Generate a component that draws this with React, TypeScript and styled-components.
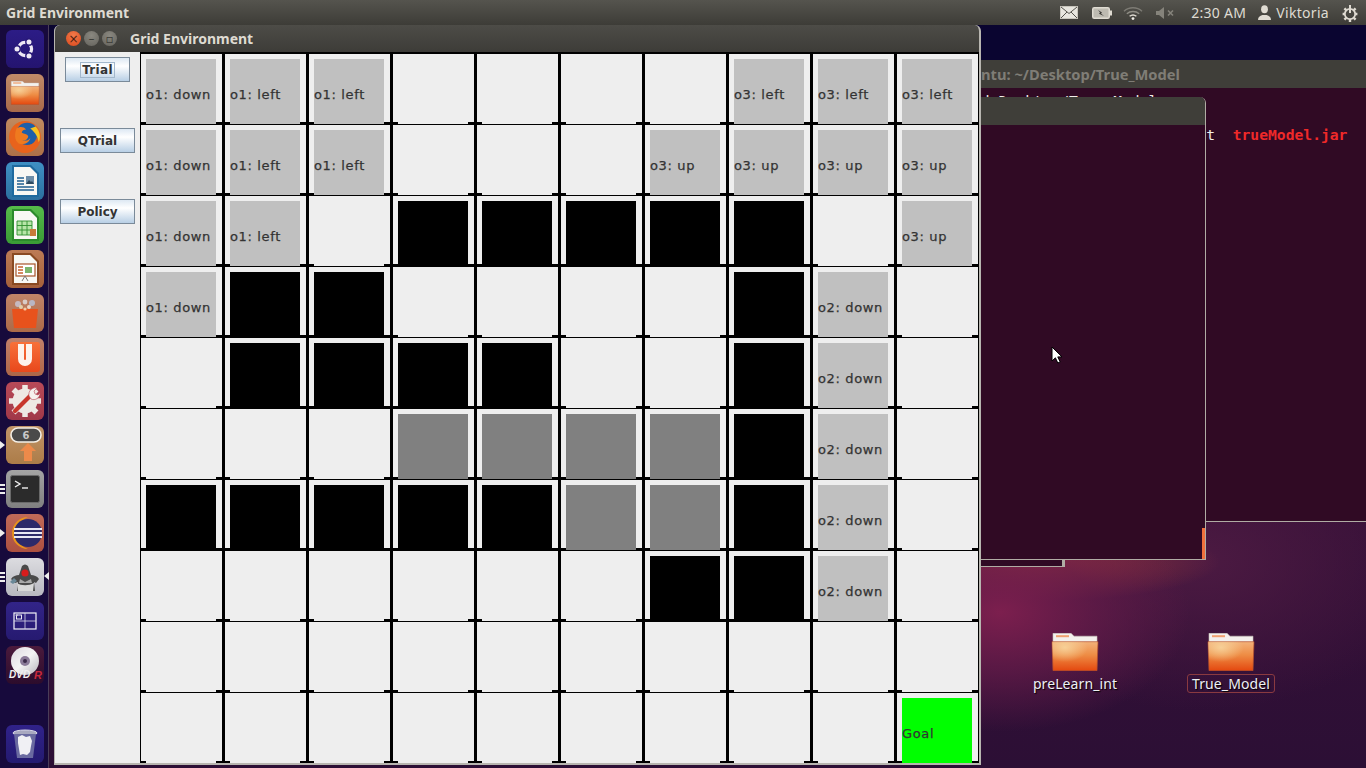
import React from "react";
import styled, { createGlobalStyle } from "styled-components";

const Global = createGlobalStyle`
  html, body { margin: 0; padding: 0; background: #2c0f35; }
  body { width: 1366px; height: 768px; overflow: hidden; font-family: "Noto Sans", sans-serif; }
`;

type Kind = "" | "wall" | "path" | "goal";
type Cell = { kind: Kind; label?: string };

const e: Cell = { kind: "" };
const B: Cell = { kind: "wall" };
const G: Cell = { kind: "path" };
const q = (label: string): Cell => ({ kind: "", label });

const d1 = q("o1: down");
const l1 = q("o1: left");
const l3 = q("o3: left");
const u3 = q("o3: up");
const d2 = q("o2: down");

const rows: Cell[][] = [
  [d1, l1, l1, e, e, e, e, l3, l3, l3],
  [d1, l1, l1, e, e, e, u3, u3, u3, u3],
  [d1, l1, e, B, B, B, B, B, e, u3],
  [d1, B, B, e, e, e, e, B, d2, e],
  [e, B, B, B, B, e, e, B, d2, e],
  [e, e, e, G, G, G, G, B, d2, e],
  [B, B, B, B, B, G, G, B, d2, e],
  [e, e, e, e, e, e, B, B, d2, e],
  [e, e, e, e, e, e, e, e, e, e],
  [e, e, e, e, e, e, e, e, e, { kind: "goal", label: "Goal" }],
];

const App = () => {
  return (
    <Desktop>
      <Global />
      <TopBar>
        <BarTitle>Grid Environment</BarTitle>
        <Tray>
          <MailIcon />
          <TrayGap $w={14} />
          <BatteryIcon />
          <TrayGap $w={11} />
          <WifiIcon />
          <TrayGap $w={13} />
          <MuteIcon />
          <TrayGap $w={17} />
          <TrayText>2:30 AM</TrayText>
          <TrayGap $w={12} />
          <UserIcon />
          <TrayGap $w={5} />
          <TrayText>Viktoria</TrayText>
          <TrayGap $w={13} />
          <GearIcon />
        </Tray>
      </TopBar>

      <Launcher>
        <Tile $tint="#2c1c86,#241470"><UbuntuLogo /></Tile>
        <Tile $tint="#c08a68,#a8694a"><FolderIcon size={30} /></Tile>
        <Tile $tint="#c08a60,#ac7048"><FirefoxLogo /></Tile>
        <Tile $tint="#3f90c4,#2b6f9f"><DocIcon tone="#1f6a9e" kind="writer" /></Tile>
        <Tile $tint="#56bb4a,#3a9a35"><DocIcon tone="#2c8a2c" kind="calc" /></Tile>
        <Tile $tint="#bd7b55,#a5603a"><DocIcon tone="#8a4a22" kind="impress" /></Tile>
        <Tile $tint="#c08468,#ac6a48"><BagIcon /></Tile>
        <Tile $tint="#c0806a,#ac6648"><UbuntuOneIcon /></Tile>
        <Tile $tint="#b84a58,#a03848"><SettingsIcon /></Tile>
        <Tile $tint="#c09468,#ac7c48" $pip="one"><UpdateIcon /></Tile>
        <Tile $tint="#a4a4a4,#808080" $pip="many"><TerminalIcon /></Tile>
        <Tile $tint="#c06a58,#ac5040" $pip="one"><EclipseIcon /></Tile>
        <Tile $tint="#dcdce0,#b8b8c0" $pip="many" $active><JavaIcon /></Tile>
        <Tile $tint="#322488,#261a70"><WorkspaceIcon /></Tile>
        <Tile $tint="#4a1a3c,#2c0c2c"><DvdIcon /></Tile>
        <TrashTile $tint="#30228a,#241a70"><TrashIcon /></TrashTile>
      </Launcher>

      <TerminalWindow $left={966} $top={60} $width={420} $height={462}>
        <TerminalHead>
          <TerminalTitle>ntu: ~/Desktop/True_Model</TerminalTitle>
        </TerminalHead>
        <TerminalBody>
          <TermLine $indent={6}>cd Desktop/True_Model</TermLine>
          <TermLine $indent={2}>&nbsp;</TermLine>
          <TermLine $indent={2}>
            {"                           t  "}
            <TermFile>trueModel.jar</TermFile>
          </TermLine>
        </TerminalBody>
      </TerminalWindow>

      <BackWindow />

      <TerminalWindow $left={970} $top={97} $width={236} $height={463} $rounded>
        <TerminalHead />
        <TerminalBody />
        <ResizeGrip />
      </TerminalWindow>

      <DesktopIcon $left={1034}>
        <FolderIcon size={48} />
        <IconLabel>preLearn_int</IconLabel>
      </DesktopIcon>
      <DesktopIcon $left={1190}>
        <FolderIcon size={48} />
        <IconLabel $selected>True_Model</IconLabel>
      </DesktopIcon>

      <AppWindow>
        <TitleBar>
          <WindowButtons>
            <CloseButton>×</CloseButton>
            <GreyButton>–</GreyButton>
            <GreyButton>▫</GreyButton>
          </WindowButtons>
          <WindowTitle>Grid Environment</WindowTitle>
        </TitleBar>
        <WindowBody>
          <SidePanel>
            <JButton $width={65}><FocusText>Trial</FocusText></JButton>
            <JButton $width={75}>QTrial</JButton>
            <JButton $width={75}>Policy</JButton>
          </SidePanel>
          <Grid>
            {rows.map((row, r) =>
              row.map((c, i) => (
                <GridCell key={r + "-" + i}>
                  {c.kind === "wall" && <Block $fill="#000000" />}
                  {c.kind === "path" && <Block $fill="#808080">{c.label}</Block>}
                  {c.kind === "goal" && <Block $fill="#00ff00">{c.label}</Block>}
                  {c.kind === "" && c.label && <Block $fill="#c0c0c0">{c.label}</Block>}
                </GridCell>
              ))
            )}
          </Grid>
        </WindowBody>
      </AppWindow>

      <Cursor viewBox="0 0 12 18" width="12" height="18">
        <path d="M1 1v14l3.4-3.2 2.4 5.2 2.4-1.1-2.4-5H11z" fill="#fff" stroke="#000" strokeWidth="1" />
      </Cursor>
    </Desktop>
  );
};

export default App;

/* tray icons */
const MailIcon = () => (
  <svg width="18" height="13" viewBox="0 0 18 13">
    <rect x="0.5" y="0.5" width="17" height="12" fill="#e8e6df" stroke="#c8c5bc" />
    <path d="M1 1l8 6.5L17 1M1 12l6-6M17 12l-6-6" fill="none" stroke="#55534d" strokeWidth="1" />
  </svg>
);

const BatteryIcon = () => (
  <svg width="20" height="12" viewBox="0 0 20 12">
    <rect x="0.75" y="0.75" width="16.5" height="10.5" rx="1.5" fill="#bdbab1" stroke="#dfdbd2" strokeWidth="1.5" />
    <rect x="18" y="3.5" width="2" height="5" fill="#dfdbd2" />
    <path d="M6 3l4 2.4L9 6.6l3 2.4-5-2.2 1-1.2z" fill="#3c3b37" />
  </svg>
);

const WifiIcon = () => (
  <svg width="20" height="14" viewBox="0 0 20 14" fill="none">
    <path d="M1 5.2c5-4.6 13-4.6 18 0" stroke="#7d7b74" strokeWidth="1.4" />
    <path d="M3.8 7.8c3.5-3 8.9-3 12.4 0" stroke="#8f8d85" strokeWidth="1.4" />
    <path d="M6.6 10.3c2-1.6 4.8-1.6 6.8 0" stroke="#dfdbd2" strokeWidth="1.4" />
    <circle cx="10" cy="12.6" r="1.4" fill="#f0ede6" />
  </svg>
);

const MuteIcon = () => (
  <svg width="18" height="12" viewBox="0 0 18 12">
    <path d="M0 4h3l5-4v12l-5-4H0z" fill="#85837b" />
    <path d="M12 3.5l5 5M17 3.5l-5 5" stroke="#85837b" strokeWidth="1.6" />
  </svg>
);

const UserIcon = () => (
  <svg width="13" height="15" viewBox="0 0 13 15">
    <ellipse cx="6.5" cy="4.2" rx="3.4" ry="4" fill="#dfdbd2" />
    <path d="M0 15c0-3 1.8-4 4.4-5h4.2c2.6 1 4.4 2 4.4 5z" fill="#dfdbd2" />
  </svg>
);

const GearIcon = () => (
  <svg width="16" height="18" viewBox="0 0 16 18">
    <circle cx="8" cy="10" r="5.2" fill="none" stroke="#dfdbd2" strokeWidth="1.8" />
    <path d="M8 1v8" stroke="#dfdbd2" strokeWidth="2" />
    <path d="M0.6 10h2.4M13 10h2.4M2.4 4.4l1.8 1.8M13.6 4.4l-1.8 1.8M2.4 15.6l1.8-1.8M13.6 15.6l-1.8-1.8M8 15v3" stroke="#dfdbd2" strokeWidth="2.4" />
  </svg>
);

/* launcher icons */
const UbuntuLogo = () => (
  <svg width="24" height="24" viewBox="0 0 24 24">
    <circle cx="12" cy="12" r="6.6" fill="none" stroke="#eee9f5" strokeWidth="3.2" />
    <g fill="#eee9f5" stroke="#281878" strokeWidth="1.4">
      <circle cx="4" cy="12" r="3.2" />
      <circle cx="16" cy="5" r="3.2" />
      <circle cx="16" cy="19" r="3.2" />
    </g>
  </svg>
);

const FolderIcon = ({ size }: { size: number }) => (
  <svg width={size} height={size * 0.8} viewBox="0 0 48 38">
    <defs>
      <linearGradient id="folderBody" x1="0" y1="0" x2="0" y2="1">
        <stop offset="0" stopColor="#f3b27a" />
        <stop offset="0.45" stopColor="#ee8d45" />
        <stop offset="1" stopColor="#e4480f" />
      </linearGradient>
      <radialGradient id="folderGlow" cx="0.28" cy="0.2" r="0.5">
        <stop offset="0" stopColor="#f8d8a0" stopOpacity="0.85" />
        <stop offset="1" stopColor="#f8d8a0" stopOpacity="0" />
      </radialGradient>
    </defs>
    <path d="M2 0h18l3 3h23v9H2z" fill="#f4f1ed" stroke="#c9c2bb" strokeWidth="0.6" />
    <rect x="5" y="2" width="13" height="2" fill="#f0a070" />
    <path d="M1 8.5h46l-1 29H2z" fill="url(#folderBody)" stroke="#b4502c" strokeWidth="0.7" />
    <path d="M1 8.5h46l-1 29H2z" fill="url(#folderGlow)" />
  </svg>
);

const FirefoxLogo = () => (
  <svg width="34" height="34" viewBox="0 0 32 32">
    <circle cx="16" cy="16" r="15" fill="#e8631c" />
    <circle cx="18" cy="13" r="10.5" fill="#1d5fa8" />
    <path d="M8 8c-1 5-1 9 2 13 3 3 8 4 12 2 3-2 5-5 5-8 1 7-4 15-12 15C8 30 2 24 2 16 2 11 5 7 8 4c-1 2 0 3 0 4z" fill="#e8631c" />
    <path d="M8 8c3-2 7-2 9 1-2 0-4 1-4 3 2 1 5 1 6 3 0 3-3 5-6 4 2 1 6 1 8-2-1 5-7 7-11 5-4-3-4-9-2-14z" fill="#ef7a1f" />
    <path d="M26 6c4 4 5 10 3 15-1-5-3-9-8-13z" fill="#f7c41f" />
  </svg>
);

const DocIcon = ({ tone, kind }: { tone: string; kind: "writer" | "calc" | "impress" }) => (
  <svg width="30" height="34" viewBox="0 0 30 34">
    <path d="M2 1h19l8 8v24H2z" fill={tone} />
    <path d="M4 3h16l7 7v21H4z" fill="#f8f8f4" />
    {kind === "writer" && (
      <g>
        <path d="M7 14h7M7 17h7M7 20h7M7 23h17M7 26h17" stroke="#1f5f90" strokeWidth="1.3" />
        <rect x="16" y="12" width="8" height="8" fill="#6d8ea8" />
        <path d="M16 20l3-4 2 2 1-1 2 3z" fill="#2c4a60" />
      </g>
    )}
    {kind === "calc" && (
      <g>
        <rect x="7" y="13" width="15" height="14" fill="#b7e6a8" />
        <path d="M7 13h15M7 17.5h15M7 22h15M7 27h15M7 13v14M12 13v14M17 13v14M22 13v14" stroke="#2f8f2f" strokeWidth="0.9" />
        <rect x="20" y="21" width="6" height="7" fill="#c87a3a" />
      </g>
    )}
    {kind === "impress" && (
      <g>
        <rect x="6" y="12" width="19" height="12" fill="#fff" stroke="#a8552a" strokeWidth="1.2" />
        <path d="M8 15h5M8 18h5M8 21h5" stroke="#c8612c" strokeWidth="1.4" />
        <rect x="15" y="15" width="7" height="6" fill="#7cb56c" />
        <path d="M12 29l3-5 3 5" fill="none" stroke="#777" strokeWidth="1" />
      </g>
    )}
  </svg>
);

const BagIcon = () => (
  <svg width="32" height="32" viewBox="0 0 32 32">
    <circle cx="9" cy="7" r="3" fill="#c8c8d8" opacity="0.8" />
    <circle cx="16" cy="5" r="2.4" fill="#e0e0e0" opacity="0.8" />
    <circle cx="23" cy="6" r="3" fill="#b8c4dc" opacity="0.8" />
    <circle cx="12" cy="10" r="2" fill="#e8d8b0" opacity="0.9" />
    <circle cx="20" cy="10" r="2" fill="#f0e0d0" opacity="0.9" />
    <path d="M3 12h26l-2 19H5z" fill="#e8521c" />
    <circle cx="16" cy="12" r="1.6" fill="#f8c8a0" />
  </svg>
);

const UbuntuOneIcon = () => (
  <svg width="32" height="32" viewBox="0 0 32 32">
    <defs>
      <linearGradient id="uOne" x1="0" y1="0" x2="0" y2="1">
        <stop offset="0" stopColor="#f8713a" />
        <stop offset="1" stopColor="#e8481c" />
      </linearGradient>
    </defs>
    <rect x="1" y="1" width="30" height="30" rx="3" fill="url(#uOne)" />
    <path d="M9 3v15a7 7 0 0014 0V3h-6v15a1 1 0 01-2 0V3z" fill="#fdf3ec" />
  </svg>
);

const SettingsIcon = () => (
  <svg width="34" height="34" viewBox="0 0 34 34">
    <path d="M17 1v6M17 27v6M1 17h6M27 17h6M5.5 5.5l4 4M28.5 5.5l-4 4M5.5 28.5l4-4M28.5 28.5l-4-4" stroke="#eee9e4" strokeWidth="5.5" />
    <circle cx="17" cy="17" r="12.5" fill="#eee9e4" />
    <path d="M7 27L23 11" stroke="#c8372c" strokeWidth="4.2" strokeLinecap="round" />
    <path d="M21 12c-1-5 3-9 8-8l-3 3 1 3 3 1 2-2c0 5-5 8-9 6z" fill="#f6f2ee" stroke="#b84a58" strokeWidth="0.6" />
  </svg>
);

const UpdateIcon = () => (
  <svg width="36" height="36" viewBox="0 0 36 36">
    <rect x="4" y="1" width="30" height="14" rx="7" fill="#4a4a4a" stroke="#f4efe6" strokeWidth="1.6" />
    <text x="19" y="12" textAnchor="middle" fontFamily="DejaVu Sans, sans-serif" fontWeight="700" fontSize="10" fill="#c8c8c8">6</text>
    <path d="M21 16l8 8h-4v10h-8V24h-4z" fill="#ed8a4a" />
  </svg>
);

const TerminalIcon = () => (
  <svg width="30" height="28" viewBox="0 0 30 28">
    <rect x="0.5" y="0.5" width="29" height="27" rx="2" fill="#2b2b2b" stroke="#6a6a6a" />
    <path d="M5 6l5 3-5 3" fill="none" stroke="#f0f0f0" strokeWidth="1.4" />
    <path d="M12 13h6" stroke="#f0f0f0" strokeWidth="1.4" />
  </svg>
);

const EclipseIcon = () => (
  <svg width="34" height="34" viewBox="0 0 34 34">
    <path d="M20 1a16 16 0 100 32A17 17 0 0120 1z" fill="#e8941c" />
    <circle cx="20" cy="17" r="14" fill="#2c2a6a" />
    <path d="M6 13h28M6 17h28M6 21h28" stroke="#e8e8f4" strokeWidth="1.8" />
  </svg>
);

const JavaIcon = () => (
  <svg width="34" height="34" viewBox="0 0 34 34">
    <path d="M3 19c2-3 5-4 8-4l3-9c2-2 4-2 6 0l3 9c3 0 6 1 8 4l-3 4-2-1 1 9H9l1-9-3 1z" fill="#4a4a4a" />
    <path d="M9 23c4 3 12 3 17 0l-1 8H10z" fill="#d8d8d8" />
    <path d="M12 19l5 3 6-3 1 4H11z" fill="#a8a8a8" />
    <circle cx="17" cy="13" r="3.6" fill="#d81c1c" />
    <path d="M2 22l4-4 3 3-4 3z" fill="#6a8898" />
  </svg>
);

const WorkspaceIcon = () => (
  <svg width="24" height="18" viewBox="0 0 24 18">
    <rect x="1" y="1" width="22" height="16" fill="none" stroke="#f4f4f8" strokeWidth="1.2" />
    <path d="M12 1v16M1 9h22" stroke="#d8d8e8" strokeWidth="0.8" />
    <rect x="3.5" y="3" width="5" height="4" fill="none" stroke="#fff" strokeWidth="0.9" />
    <rect x="2.5" y="2.4" width="2.4" height="1.4" fill="#c8c8e0" />
  </svg>
);

const DvdIcon = () => (
  <svg width="38" height="36" viewBox="0 0 38 36">
    <defs>
      <linearGradient id="disc" x1="0" y1="0" x2="1" y2="1">
        <stop offset="0" stopColor="#dcd8e0" />
        <stop offset="0.5" stopColor="#f4f4f4" />
        <stop offset="1" stopColor="#b8b4bc" />
      </linearGradient>
    </defs>
    <circle cx="19" cy="14" r="14" fill="url(#disc)" />
    <circle cx="19" cy="14" r="5" fill="#8a7a98" />
    <circle cx="19" cy="14" r="2" fill="#3a2a48" />
    <text x="3" y="31" fontFamily="Liberation Sans, sans-serif" fontStyle="italic" fontWeight="700" fontSize="10" fill="#f0f0f0">DVD</text>
    <text x="28" y="32" fontFamily="Liberation Sans, sans-serif" fontStyle="italic" fontWeight="700" fontSize="11" fill="#c8283c">R</text>
  </svg>
);

const TrashIcon = () => (
  <svg width="26" height="30" viewBox="0 0 26 30">
    <ellipse cx="13" cy="4" rx="12" ry="3" fill="#a8a8c0" stroke="#d8d8e8" strokeWidth="1" />
    <path d="M2 5l3 24h16l3-24z" fill="#6a6aa0" />
    <path d="M6 8l4-2 4 2 4-1 2 5-1 5-1 6-3 3-4-1-3 1-1-6-1-6z" fill="#f0f0f4" />
  </svg>
);

/* layout */
const Desktop = styled.div`
  position: relative;
  width: 1366px;
  height: 768px;
  overflow: hidden;
  background:
    radial-gradient(ellipse 190px 120px at 1000px 612px, #7c1f4e 0%, rgba(104, 28, 74, 0.7) 50%, rgba(80, 20, 60, 0) 100%),
    radial-gradient(ellipse 190px 40px at 1030px 562px, #a03a3c 0%, rgba(120, 40, 60, 0) 100%),
    radial-gradient(ellipse 240px 150px at 1200px 560px, #4c1a42 0%, rgba(70, 20, 60, 0) 100%),
    linear-gradient(to bottom, #0a0530 0, #0a0530 90px, #3a1038 400px, #2c0f35 768px);
`;

const TopBar = styled.div`
  height: 25px;
  box-sizing: border-box;
  padding: 0 8px 0 6px;
  display: flex;
  align-items: center;
  justify-content: space-between;
  background: linear-gradient(to bottom, #55544e, #3d3c37);
`;

const BarTitle = styled.div`
  font-weight: 700;
  font-size: 14px;
  color: #dfdbd2;
`;

const Tray = styled.div`
  display: flex;
  align-items: center;
`;

const TrayGap = styled.span<{ $w: number }>`
  width: ${({ $w }) => $w}px;
`;

const TrayText = styled.span`
  font-size: 14px;
  letter-spacing: 0.3px;
  color: #dfdbd2;
`;

const Launcher = styled.div`
  position: absolute;
  left: 0;
  top: 25px;
  width: 49px;
  height: 743px;
  box-sizing: border-box;
  padding: 5px 0 5px 6px;
  display: flex;
  flex-direction: column;
  gap: 6px;
  background: #170a3c;
  border-right: 1px solid #4a3d58;
`;

const Tile = styled.div<{ $tint: string; $pip?: "one" | "many"; $active?: boolean }>`
  position: relative;
  flex: none;
  width: 38px;
  height: 38px;
  border-radius: 6px;
  display: flex;
  align-items: center;
  justify-content: center;
  background: linear-gradient(to bottom, ${({ $tint }) => $tint});

  &::before {
    content: "";
    display: ${({ $pip }) => ($pip ? "block" : "none")};
    position: absolute;
    left: -6px;
    top: ${({ $pip }) => ($pip === "one" ? "15px" : "14px")};
    width: 0;
    height: 0;
    ${({ $pip }) =>
      $pip === "one"
        ? "border-left: 5px solid #eee; border-top: 4px solid transparent; border-bottom: 4px solid transparent;"
        : "width: 5px; height: 2px; background: #eee; box-shadow: 0 4px 0 #eee, 0 8px 0 #eee;"}
  }

  &::after {
    content: "";
    display: ${({ $active }) => ($active ? "block" : "none")};
    position: absolute;
    right: -5px;
    top: 14px;
    border-right: 5px solid #eee;
    border-top: 4px solid transparent;
    border-bottom: 4px solid transparent;
  }
`;

const TrashTile = styled(Tile)`
  margin-top: auto;
`;

const TerminalWindow = styled.div<{ $left: number; $top: number; $width: number; $height: number; $rounded?: boolean }>`
  position: absolute;
  left: ${({ $left }) => $left}px;
  top: ${({ $top }) => $top}px;
  width: ${({ $width }) => $width}px;
  height: ${({ $height }) => $height}px;
  box-sizing: border-box;
  display: flex;
  flex-direction: column;
  border-right: 1px solid #b0aca4;
  border-bottom: 1px solid #b0aca4;
  border-top-right-radius: ${({ $rounded }) => ($rounded ? "6px" : "0")};
  overflow: hidden;
  background: #300a24;
`;

const TerminalHead = styled.div`
  flex: none;
  height: 28px;
  display: flex;
  align-items: center;
  background: #3f3e39;
`;

const TerminalTitle = styled.span`
  padding-left: 15px;
  font-weight: 700;
  font-size: 14.7px;
  color: #7f7d76;
  white-space: nowrap;
`;

const TerminalBody = styled.div`
  flex: 1;
  padding-top: 4px;
  background: #300a24;
`;

const TermLine = styled.div<{ $indent: number }>`
  height: 17px;
  line-height: 17px;
  padding-left: ${({ $indent }) => $indent}px;
  font-family: "DejaVu Sans Mono", monospace;
  font-size: 14.67px;
  color: #f0eeea;
  white-space: pre;
`;

const TermFile = styled.span`
  font-weight: 700;
  color: #ef2929;
`;

const ResizeGrip = styled.div`
  position: absolute;
  right: 0;
  bottom: 0;
  width: 3px;
  height: 31px;
  background: #f0703c;
`;

const BackWindow = styled.div`
  position: absolute;
  left: 970px;
  top: 540px;
  width: 95px;
  height: 27px;
  box-sizing: border-box;
  background: #300a24;
  border-bottom: 1px solid #b0aca4;
  border-right: 3px solid #b0aca4;
`;

const DesktopIcon = styled.div<{ $left: number }>`
  position: absolute;
  left: ${({ $left }) => $left}px;
  top: 633px;
  width: 82px;
  display: flex;
  flex-direction: column;
  align-items: center;
  gap: 3px;
`;

const IconLabel = styled.div<{ $selected?: boolean }>`
  padding: 0 4px;
  height: 19px;
  line-height: 18px;
  box-sizing: border-box;
  border-radius: 3px;
  border: 1px solid ${({ $selected }) => ($selected ? "#8a3a40" : "transparent")};
  font-size: 14px;
  letter-spacing: 0.1px;
  color: #eef0f4;
  white-space: nowrap;
  text-shadow: 1px 1px 1px #000;
`;

const AppWindow = styled.div`
  position: absolute;
  left: 54px;
  top: 25px;
  width: 927px;
  height: 740px;
  box-sizing: border-box;
  display: flex;
  flex-direction: column;
  border-radius: 6px 6px 0 0;
  overflow: hidden;
  background: #eeeeee;
  border-left: 1px solid #b8b6b0;
  border-right: 2px solid #b8b6b0;
  border-bottom: 2px solid #b8b6b0;
`;

const TitleBar = styled.div`
  flex: none;
  height: 27px;
  display: flex;
  align-items: center;
  background: linear-gradient(to bottom, #4d4c47, #3d3c38);
`;

const WindowButtons = styled.div`
  display: flex;
  gap: 3px;
  margin-left: 11px;
`;

const CloseButton = styled.div`
  width: 15px;
  height: 15px;
  border-radius: 50%;
  display: flex;
  align-items: center;
  justify-content: center;
  font-family: "DejaVu Sans", sans-serif;
  font-size: 12px;
  line-height: 1;
  color: #4a2010;
  background: radial-gradient(circle at 50% 30%, #f27a4a, #d9481c);
`;

const GreyButton = styled(CloseButton)`
  color: #3a3a36;
  background: radial-gradient(circle at 50% 30%, #8a8880, #64625c);
`;

const WindowTitle = styled.div`
  margin-left: 13px;
  font-weight: 700;
  font-size: 14px;
  color: #dfdbd2;
`;

const WindowBody = styled.div`
  flex: 1;
  display: flex;
  min-height: 0;
`;

const SidePanel = styled.div`
  flex: none;
  width: 85px;
  box-sizing: border-box;
  padding-top: 5px;
  display: flex;
  flex-direction: column;
  align-items: center;
  gap: 46px;
  background: #eeeeee;
`;

const JButton = styled.div<{ $width: number }>`
  width: ${({ $width }) => $width}px;
  height: 25px;
  box-sizing: border-box;
  display: flex;
  align-items: center;
  justify-content: center;
  border: 1px solid #7a8a99;
  background: linear-gradient(to bottom, #dde8f3 0%, #ffffff 35%, #b8cfe5 100%);
  font-family: "DejaVu Sans", sans-serif;
  font-weight: 700;
  font-size: 12px;
  color: #333333;
`;

const FocusText = styled.span`
  padding: 0 1px;
  letter-spacing: 0.3px;
  outline: 1px solid #a3b8cc;
`;

const Grid = styled.div`
  flex: none;
  display: grid;
  grid-template-columns: repeat(10, 84px);
  grid-auto-rows: 71px;
  border-top: 2px solid #000;
  border-left: 1px solid #000;
  background: #eeeeee;
`;

const GridCell = styled.div`
  position: relative;
  box-sizing: border-box;
  padding: 5px 6px 0 5px;
  border-right: 3px solid #000;
  border-bottom: 1px solid #000;

  &::before,
  &::after {
    content: "";
    position: absolute;
    bottom: 0;
    height: 2px;
    background: #000;
  }
  &::before {
    left: 0;
    width: 5px;
  }
  &::after {
    right: 0;
    width: 6px;
  }
`;

const Block = styled.div<{ $fill: string }>`
  height: 65px;
  box-sizing: border-box;
  padding-top: 5px;
  display: flex;
  align-items: center;
  background: ${({ $fill }) => $fill};
  font-family: "DejaVu Sans", sans-serif;
  font-size: 13px;
  letter-spacing: 0.65px;
  -webkit-text-stroke: 0.25px #333333;
  color: #333333;
  white-space: nowrap;
`;

const Cursor = styled.svg`
  position: absolute;
  left: 1051px;
  top: 346px;
`;
